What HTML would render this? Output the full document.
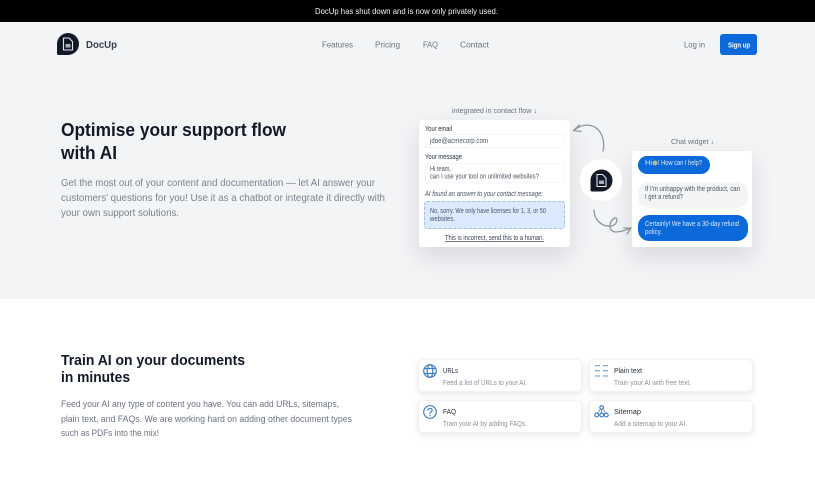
<!DOCTYPE html>
<html lang="en">
<head>
<meta charset="utf-8">
<title>DocUp</title>
<style>
html,body{margin:0;padding:0;width:815px;height:480px;overflow:hidden;background:#fff;font-family:"Liberation Sans",sans-serif}
#w{position:absolute;left:0;top:0;width:815px;height:480px;overflow:hidden;filter:blur(.35px)}
.a{position:absolute;box-sizing:border-box}
svg{position:absolute;left:0;top:0}
text{font-family:"Liberation Sans",sans-serif;white-space:pre}
.nav{font-size:8px;fill:#6b7280}
.lab{font-size:7px;fill:#1f2937}
.fld{font-size:7px;fill:#4b5563}
.cap{font-size:7.5px;fill:#6b7280}
.p1{font-size:10.5px;fill:#7b828e}
.p2{font-size:9.5px;fill:#6b7280}
.ct{font-size:7.5px;fill:#1f2937}
.cd{font-size:7px;fill:#8b919c}
.w{font-size:7px;fill:#dbe9fb}
.card{background:#fff;border:1px solid #f0f1f3;border-radius:5px;box-shadow:0 2px 7px rgba(17,24,39,.11)}
</style>
</head>
<body>
<div id="w">
<div class="a" style="left:0;top:0;width:815px;height:22px;background:#000"></div>
<div class="a" style="left:0;top:22px;width:815px;height:277px;background:#f3f4f6"></div>
<div class="a" style="left:720px;top:34px;width:37px;height:21px;background:#0b69d9;border-radius:3px"></div>

<div class="a" style="left:419px;top:120px;width:151px;height:127px;background:#fff;border-radius:3px;box-shadow:0 10px 24px rgba(17,24,39,.12)"></div>
<div class="a" style="left:425px;top:134px;width:140px;height:14px;background:#fff;border:1px solid #f5f6f7;border-radius:3px"></div>
<div class="a" style="left:425px;top:163px;width:140px;height:20px;background:#fff;border:1px solid #f5f6f7;border-radius:3px"></div>
<div class="a" style="left:424px;top:201px;width:141px;height:28px;background:#dbeafe;border:1px dashed #a3bfe0;border-radius:3px"></div>

<div class="a" style="left:632px;top:151px;width:120px;height:96px;background:#fff;border-radius:3px;box-shadow:0 10px 24px rgba(17,24,39,.12)"></div>
<div class="a" style="left:638px;top:156px;width:72px;height:18px;background:#0b69d9;border-radius:9px"></div>
<div class="a" style="left:638px;top:182px;width:110px;height:26px;background:#f3f4f6;border-radius:11px"></div>
<div class="a" style="left:638px;top:215px;width:110px;height:26px;background:#0b69d9;border-radius:11px"></div>
<div class="a" style="left:580px;top:159px;width:42px;height:42px;background:#fff;border-radius:50%"></div>

<div class="a card" style="left:418px;top:359px;width:164px;height:33px"></div>
<div class="a card" style="left:589px;top:359px;width:164px;height:33px"></div>
<div class="a card" style="left:418px;top:400px;width:164px;height:33px"></div>
<div class="a card" style="left:589px;top:400px;width:164px;height:33px"></div>

<svg width="815" height="480" viewBox="0 0 815 480" xmlns="http://www.w3.org/2000/svg">
<defs>
<g id="logo">
<path d="M11 0A11 11 0 0 1 11 22H1.500Q0 22 0 20.500V11A11 11 0 0 1 11 0Z" fill="#111827"/>
<path d="M6.500 5H12L15.500 8.500V17H6.500Z" fill="none" stroke="#e5e7eb" stroke-width="1.100" stroke-linejoin="round"/>
<path d="M8.500 11H13.500V14.500H8.500Z" fill="#d1d5db" opacity=".8"/>
</g>
</defs>

<text x="315" y="14" font-size="8.5" fill="#f3f4f6" textLength="183" lengthAdjust="spacingAndGlyphs">DocUp has shut down and is now only privately used.</text>

<use href="#logo" x="57" y="33"/>
<text x="86" y="48" font-size="10.5" font-weight="700" fill="#374151" textLength="31" lengthAdjust="spacingAndGlyphs">DocUp</text>
<text class="nav" x="322" y="47.5" textLength="31" lengthAdjust="spacingAndGlyphs">Features</text>
<text class="nav" x="375" y="47.5" textLength="25" lengthAdjust="spacingAndGlyphs">Pricing</text>
<text class="nav" x="423" y="47.5" textLength="15" lengthAdjust="spacingAndGlyphs">FAQ</text>
<text class="nav" x="460" y="47.5" textLength="29" lengthAdjust="spacingAndGlyphs">Contact</text>
<text class="nav" x="684" y="47.5" textLength="21" lengthAdjust="spacingAndGlyphs">Log in</text>
<text x="728" y="47.5" font-size="7.5" font-weight="700" fill="#fff" textLength="22" lengthAdjust="spacingAndGlyphs">Sign up</text>

<text x="61" y="136" font-size="18" font-weight="700" fill="#111827" textLength="225" lengthAdjust="spacingAndGlyphs">Optimise your support flow</text>
<text x="61" y="159" font-size="18" font-weight="700" fill="#111827" textLength="56" lengthAdjust="spacingAndGlyphs">with AI</text>
<text class="p1" x="61" y="186" textLength="314" lengthAdjust="spacingAndGlyphs">Get the most out of your content and documentation — let AI answer your</text>
<text class="p1" x="61" y="201" textLength="324" lengthAdjust="spacingAndGlyphs">customers' questions for you! Use it as a chatbot or integrate it directly with</text>
<text class="p1" x="61" y="216" textLength="118" lengthAdjust="spacingAndGlyphs">your own support solutions.</text>

<text class="cap" x="452" y="113" textLength="85" lengthAdjust="spacingAndGlyphs">integrated in contact flow ↓</text>
<text class="lab" x="425" y="131" textLength="27" lengthAdjust="spacingAndGlyphs">Your email</text>
<text class="fld" x="430" y="143" textLength="58" lengthAdjust="spacingAndGlyphs">jdoe@acmecorp.com</text>
<text class="lab" x="425" y="159" textLength="37" lengthAdjust="spacingAndGlyphs">Your message</text>
<text class="fld" x="430" y="171" textLength="21" lengthAdjust="spacingAndGlyphs">Hi team,</text>
<text class="fld" x="430" y="178.500" textLength="109" lengthAdjust="spacingAndGlyphs">can I use your tool on unlimited websites?</text>
<text class="fld" x="425" y="196" font-style="italic" textLength="118" lengthAdjust="spacingAndGlyphs">AI found an answer to your contact message:</text>
<text class="fld" x="430" y="213" textLength="116" lengthAdjust="spacingAndGlyphs">No, sorry. We only have licenses for 1, 3, or 50</text>
<text class="fld" x="430" y="221" textLength="25" lengthAdjust="spacingAndGlyphs">websites.</text>
<text class="fld" x="445" y="240" style="fill:#374151" text-decoration="underline" textLength="99" lengthAdjust="spacingAndGlyphs">This is incorrect, send this to a human.</text>

<text class="cap" x="671" y="144" textLength="43" lengthAdjust="spacingAndGlyphs">Chat widget ↓</text>
<text class="w" x="645" y="165" textLength="7" lengthAdjust="spacingAndGlyphs">Hi</text>
<circle cx="655" cy="163" r="2.500" fill="#a9bf9a"/>
<text class="w" x="658" y="165" textLength="44" lengthAdjust="spacingAndGlyphs">! How can I help?</text>
<text class="fld" x="645" y="191" textLength="95" lengthAdjust="spacingAndGlyphs">If I'm unhappy with the product, can</text>
<text class="fld" x="645" y="199" textLength="38" lengthAdjust="spacingAndGlyphs">I get a refund?</text>
<text class="w" x="645" y="226" textLength="94" lengthAdjust="spacingAndGlyphs">Certainly! We have a 30-day refund</text>
<text class="w" x="645" y="234" textLength="17" lengthAdjust="spacingAndGlyphs">policy.</text>

<use href="#logo" x="590.500" y="169.500"/>
<g fill="none" stroke="#8f949c" stroke-width="1.300" stroke-linecap="round" stroke-linejoin="round">
<path d="M603 151C607 132 592 117 574 130"/>
<path d="M579.500 125L573.500 130.500L581 131.500"/>
<path d="M594 210C594 220 602 227 611 226C618 225 618 217 615 218C609 220 607 232 616 232C621 232 626 230 631 228"/>
<path d="M624 228L631 228L627 234"/>
</g>

<text x="61" y="365" font-size="15" font-weight="700" fill="#111827" textLength="184" lengthAdjust="spacingAndGlyphs">Train AI on your documents</text>
<text x="61" y="382" font-size="15" font-weight="700" fill="#111827" textLength="69" lengthAdjust="spacingAndGlyphs">in minutes</text>
<text class="p2" x="61" y="407" textLength="278" lengthAdjust="spacingAndGlyphs">Feed your AI any type of content you have. You can add URLs, sitemaps,</text>
<text class="p2" x="61" y="422" textLength="291" lengthAdjust="spacingAndGlyphs">plain text, and FAQs. We are working hard on adding other document types</text>
<text class="p2" x="61" y="436" textLength="98" lengthAdjust="spacingAndGlyphs">such as PDFs into the mix!</text>

<g fill="none" stroke="#3f7fc2" stroke-width="1.200">
<circle cx="430" cy="371" r="6.300"/>
<ellipse cx="430" cy="371" rx="2.800" ry="6.300"/>
<path d="M424.500 368.500H435.500M424.500 373.500H435.500"/>
<circle cx="430" cy="412" r="6.300"/>
<path d="M428 410.300C428 407.800 432.200 407.800 432.200 410.300C432.200 412 430 411.800 430 413.500" stroke-linecap="round"/>
<path d="M595 365.700H600M603 365.700H608M595 370.700H600M603 370.700H608M595 376H600M603 376H608" stroke="#6a9fd0" stroke-width="1.100"/>
<circle cx="601.700" cy="407.500" r="1.800"/>
<circle cx="596.700" cy="415" r="1.900"/>
<circle cx="601.700" cy="415" r="1.900"/>
<circle cx="606.300" cy="415" r="1.900"/>
<path d="M601.700 409.500V413M600.500 409L597.500 413M603 409L605.500 413" stroke-width=".7"/>
</g>
<circle cx="430" cy="415.500" r=".8" fill="#3f7fc2"/>

<text class="ct" x="443" y="373" textLength="15" lengthAdjust="spacingAndGlyphs">URLs</text>
<text class="cd" x="443" y="385" textLength="84" lengthAdjust="spacingAndGlyphs">Feed a list of URLs to your AI.</text>
<text class="ct" x="443" y="414" textLength="13" lengthAdjust="spacingAndGlyphs">FAQ</text>
<text class="cd" x="443" y="426" textLength="84" lengthAdjust="spacingAndGlyphs">Train your AI by adding FAQs.</text>
<text class="ct" x="614" y="373" textLength="28" lengthAdjust="spacingAndGlyphs">Plain text</text>
<text class="cd" x="614" y="385" textLength="77" lengthAdjust="spacingAndGlyphs">Train your AI with free text.</text>
<text class="ct" x="614" y="414" textLength="27" lengthAdjust="spacingAndGlyphs">Sitemap</text>
<text class="cd" x="614" y="426" textLength="73" lengthAdjust="spacingAndGlyphs">Add a sitemap to your AI.</text>
</svg>
</div>
</body>
</html>
